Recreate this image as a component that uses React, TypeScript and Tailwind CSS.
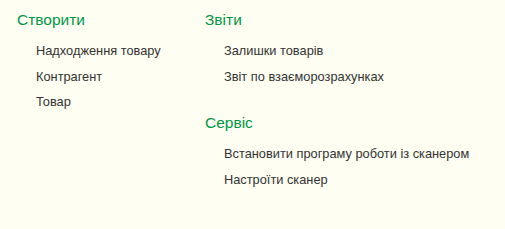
import React from 'react';

const groups = [
  { title: 'Створити', items: ['Надходження товару', 'Контрагент', 'Товар'] },
];
const right = [
  { title: 'Звіти', items: ['Залишки товарів', 'Звіт по взаєморозрахунках'] },
  { title: 'Сервіс', items: ['Встановити програму роботи із сканером', 'Настроїти сканер'] },
];

const Group: React.FC<{ title: string; items: string[] }> = ({ title, items }) => (
  <div className="mb-[14px]">
    <div className="text-[15.5px] leading-[18px] text-[#009646] pt-[11px]">{title}</div>
    <div className="pl-[19px] pt-[9px]">
      {items.map((it) => (
        <div key={it} className="text-[12.8px] leading-[25.5px] text-[#333333]">
          {it}
        </div>
      ))}
    </div>
  </div>
);

export default function App() {
  return (
    <div
      className="w-[505px] h-[229px] bg-[#fefef2] flex"
      style={{ fontFamily: '"Liberation Sans", Arial, sans-serif' }}
    >
      <div className="w-[205px] shrink-0 pl-[17px]">
        {groups.map((g) => (
          <Group key={g.title} {...g} />
        ))}
      </div>
      <div className="flex-1">
        {right.map((g) => (
          <Group key={g.title} {...g} />
        ))}
      </div>
    </div>
  );
}
